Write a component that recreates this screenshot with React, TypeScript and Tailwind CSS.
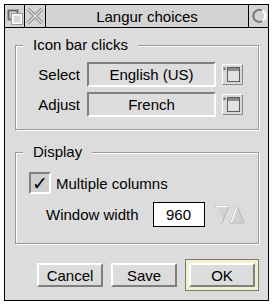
import React from 'react';

const sunken = 'border-2 border-t-[#808080] border-l-[#808080] border-b-white border-r-white';
const raised = 'border-2 border-t-white border-l-white border-b-[#7f7f7f] border-r-[#7f7f7f]';

const BackIcon = () => (
  <svg width="20" height="22" viewBox="0 0 20 22">
    <rect x="3.5" y="5.5" width="9" height="9" fill="none" stroke="#6e6e6e" strokeWidth="2" />
    <rect x="7.5" y="9.5" width="9" height="9" fill="#d6d6d6" stroke="#ffffff" strokeWidth="2" />
    <rect x="6.5" y="8.5" width="11" height="11" fill="none" stroke="#9a9a9a" strokeWidth="1" />
  </svg>
);

const CloseIcon = () => (
  <svg width="20" height="22" viewBox="0 0 20 22">
    <path d="M3 4 L17 18 M17 4 L3 18" stroke="#8a8a8a" strokeWidth="3.5" />
    <path d="M3 4 L17 18 M17 4 L3 18" stroke="#e6e6e6" strokeWidth="1.4" />
  </svg>
);

const ToggleIcon = () => (
  <svg width="19" height="22" viewBox="0 0 19 22">
    <path d="M13 5.5 A6 6 0 1 0 13.5 16" fill="none" stroke="#7a7a7a" strokeWidth="2" />
    <path d="M13.5 16 A6 6 0 0 0 13 5.5" fill="none" stroke="#ffffff" strokeWidth="2" />
  </svg>
);

const MenuIcon = () => (
  <svg width="21" height="21" viewBox="0 0 21 21">
    <rect x="0.5" y="0.5" width="20" height="20" fill="#d8d8d8" stroke="none" />
    <path d="M0.5 20.5 V0.5 H20.5" fill="none" stroke="#ffffff" strokeWidth="1" />
    <path d="M0.5 20.5 H20.5 V0.5" fill="none" stroke="#888888" strokeWidth="1" />
    <rect x="5.5" y="3.5" width="12" height="14" fill="#e2e2e2" stroke="#5a5a5a" strokeWidth="1" />
    <rect x="6" y="4" width="11" height="3" fill="#8c8c8c" />
    <path d="M1.5 3 L4.5 4.8 L1.5 6.6 Z" fill="#6a6a6a" />
  </svg>
);

const Arrows = () => (
  <svg width="32" height="21" viewBox="0 0 32 21">
    <polygon points="1,2 15,2 8,19" fill="#d2d2d2" stroke="#b4b4b4" strokeWidth="1" />
    <path d="M1.5 2.5 H14.5" stroke="#ffffff" strokeWidth="1.2" />
    <path d="M2 3 L8 18" stroke="#f4f4f4" strokeWidth="1" />
    <polygon points="16,19 30,19 23,2" fill="#d2d2d2" stroke="#b4b4b4" strokeWidth="1" />
    <path d="M17 18.5 L23 3" stroke="#ffffff" strokeWidth="1.2" />
  </svg>
);

const Group = ({ label, className, children }: any) => (
  <div
    className={`relative border border-[#9a9a9a] shadow-[inset_1px_1px_0_#ffffff,1px_1px_0_#ffffff] ${className}`}
  >
    <div className="absolute -top-[10px] left-[7px] px-[10px] bg-[#dcdcdc] text-[15px] leading-[17px]">{label}</div>
    {children}
  </div>
);

const Display = ({ children }: any) => (
  <div className={`ml-[7px] w-[129px] h-[25px] ${sunken} bg-[#dddddd] flex items-center justify-center text-[15px] leading-[17px]`}>
    {children}
  </div>
);

const Button = ({ children }: any) => (
  <div className={`w-[66px] h-[24px] ${raised} bg-[#dcdcdc] flex items-center justify-center text-[15px] leading-[17px]`}>
    {children}
  </div>
);

export default function App() {
  return (
    <div className="w-[275px] h-[306px] bg-white pt-[4px] pl-[4px] [font-family:'Liberation_Sans',Arial,sans-serif] text-black">
      <div className="w-[265px] h-[297px] border border-black flex flex-col bg-[#dcdcdc]">
        <div className="h-[23px] border-b border-black flex bg-[#d2d2d2]">
          <div className="w-[20px] border-r border-black bg-[#d4d4d4]"><BackIcon /></div>
          <div className="w-[21px] border-r border-black bg-[#d4d4d4]"><CloseIcon /></div>
          <div className="flex-1 border-r border-black bg-[#d4d4d4] flex items-center justify-center text-[15px] leading-[17px]">
            Langur choices
          </div>
          <div className="w-[19px] bg-[#d4d4d4]"><ToggleIcon /></div>
        </div>

        <div className="flex-1 flex flex-col pl-[10px] pr-[9px] pt-[17px]">
          <Group label="Icon bar clicks" className="pt-[16px] pb-[12px] flex flex-col gap-[5px]">
            <div className="flex items-center">
              <div className="w-[64px] text-right text-[15px] leading-[17px]">Select</div>
              <Display>English (US)</Display>
              <div className="ml-[6px]"><MenuIcon /></div>
            </div>
            <div className="flex items-center">
              <div className="w-[64px] text-right text-[15px] leading-[17px]">Adjust</div>
              <Display>French</Display>
              <div className="ml-[6px]"><MenuIcon /></div>
            </div>
          </Group>

          <Group label="Display" className="mt-[22px] pt-[19px] pb-[16px] pl-[13px] flex flex-col">
            <div className="flex items-center">
              <div className={`w-[22px] h-[22px] ${sunken} bg-[#cfcfcf] flex items-center justify-center`}>
                <span className="[font-family:'DejaVu_Sans',sans-serif] text-[19px] leading-none font-bold">✓</span>
              </div>
              <div className="ml-[5px] text-[15px] leading-[17px]">Multiple columns</div>
            </div>
            <div className="flex items-center mt-[8px] pl-[17px]">
              <div className="text-[15px] leading-[17px]">Window width</div>
              <div className="ml-[14px] w-[52px] h-[25px] border border-black bg-white flex items-center justify-center text-[15px] leading-[17px]">
                960
              </div>
              <div className="ml-[9px]"><Arrows /></div>
            </div>
          </Group>

          <div className="mt-[15px] pl-[22px] flex items-center">
            <Button>Cancel</Button>
            <div className="ml-[8px]"><Button>Save</Button></div>
            <div className="ml-[8px] border border-[#7a7a7a] p-[3px] bg-[#f3f1cc]">
              <Button>OK</Button>
            </div>
          </div>
        </div>
      </div>
    </div>
  );
}
